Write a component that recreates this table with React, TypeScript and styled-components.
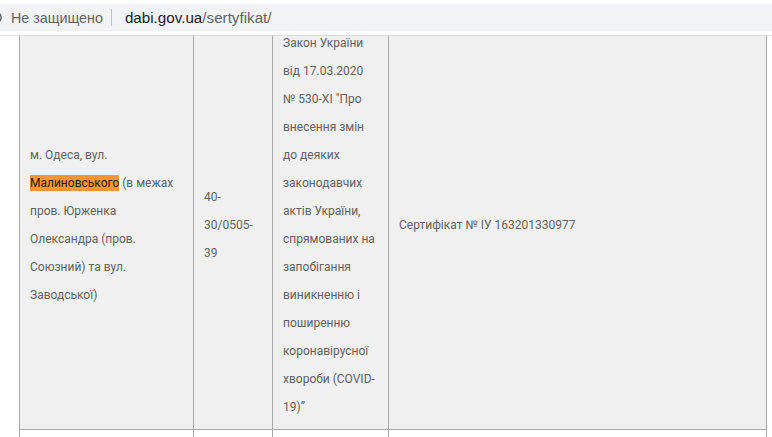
import React from "react";
import styled, { createGlobalStyle } from "styled-components";

const GlobalStyle = createGlobalStyle`
  html, body {
    margin: 0;
    padding: 0;
    background: #ffffff;
    overflow: hidden;
  }
`;

const Window = styled.div`
  display: flex;
  flex-direction: column;
  width: 772px;
  height: 437px;
  overflow: hidden;
`;

const Chrome = styled.header`
  height: 36px;
  padding-top: 4px;
  box-sizing: border-box;
  border-bottom: 1px solid #dadce0;
  background: #ffffff;
`;

const AddressBar = styled.div`
  display: flex;
  align-items: center;
  height: 27px;
  background: #f1f3f4;
  font-family: "Liberation Sans", Arial, sans-serif;
  font-size: 14px;
  white-space: nowrap;
`;

const InfoIcon = styled.svg`
  width: 13px;
  height: 13px;
  margin-left: -11px;
  margin-right: 9px;
  flex: none;
`;

const Security = styled.span`
  color: #5f6368;
  font-size: 14.3px;
`;

const Divider = styled.span`
  width: 1px;
  height: 17px;
  background: #bdc1c6;
  margin: 0 13px 0 8px;
`;

const Url = styled.span`
  font-size: 15.2px;
`;

const Host = styled.span`
  color: #202124;
`;

const Path = styled.span`
  color: #5f6368;
`;

const Viewport = styled.main`
  flex: 1;
  overflow: hidden;
  background: #ffffff;
`;

const Scroller = styled.div`
  margin-top: -15px;
  padding-left: 19px;
`;

const Row = styled.div<{ $shade: string; $minHeight?: number }>`
  display: grid;
  grid-template-columns: 174px 79px 116px 378px;
  width: max-content;
  border-left: 1px solid #a8a8a8;
  border-bottom: 1px solid #a8a8a8;
  background: ${(p) => p.$shade};
  min-height: ${(p) => (p.$minHeight ? `${p.$minHeight}px` : "0")};
`;

const Cell = styled.div`
  display: flex;
  flex-direction: column;
  justify-content: center;
  box-sizing: border-box;
  padding: 8px 10px;
  border-right: 1px solid #a8a8a8;
  font-family: Roboto, "Noto Sans", sans-serif;
  font-size: 12px;
  line-height: 28px;
  color: #626262;
`;

const Text = styled.div``;

const Mark = styled.mark`
  background: #ff9632;
  color: #1a1a1a;
  padding: 1px 0;
`;

export default function App() {
  return (
    <>
      <GlobalStyle />
      <Window>
        <Chrome>
          <AddressBar>
            <InfoIcon viewBox="0 0 14 14" aria-hidden>
              <circle cx="7" cy="7" r="6" fill="none" stroke="#5f6368" strokeWidth="1.6" />
            </InfoIcon>
            <Security>Не защищено</Security>
            <Divider />
            <Url>
              <Host>dabi.gov.ua</Host>
              <Path>/sertyfikat/</Path>
            </Url>
          </AddressBar>
        </Chrome>
        <Viewport>
          <Scroller>
            <Row $shade="#f0f0f0">
              <Cell>
                <Text>
                  м. Одеса, вул.
                  <br />
                  <Mark>Малиновського</Mark> (в межах
                  <br />
                  пров. Юрженка
                  <br />
                  Олександра (пров.
                  <br />
                  Союзний) та вул.
                  <br />
                  Заводської)
                </Text>
              </Cell>
              <Cell>
                <Text>
                  40-
                  <br />
                  30/0505-
                  <br />
                  39
                </Text>
              </Cell>
              <Cell>
                <Text>
                  Закон України
                  <br />
                  від 17.03.2020
                  <br />
                  № 530-XI "Про
                  <br />
                  внесення змін
                  <br />
                  до деяких
                  <br />
                  законодавчих
                  <br />
                  актів України,
                  <br />
                  спрямованих на
                  <br />
                  запобігання
                  <br />
                  виникненню і
                  <br />
                  поширенню
                  <br />
                  коронавірусної
                  <br />
                  хвороби (COVID-
                  <br />
                  19)”
                </Text>
              </Cell>
              <Cell>
                <Text>Сертифікат № ІУ 163201330977</Text>
              </Cell>
            </Row>
            <Row $shade="#ffffff" $minHeight={60}>
              <Cell />
              <Cell />
              <Cell />
              <Cell />
            </Row>
          </Scroller>
        </Viewport>
      </Window>
    </>
  );
}
